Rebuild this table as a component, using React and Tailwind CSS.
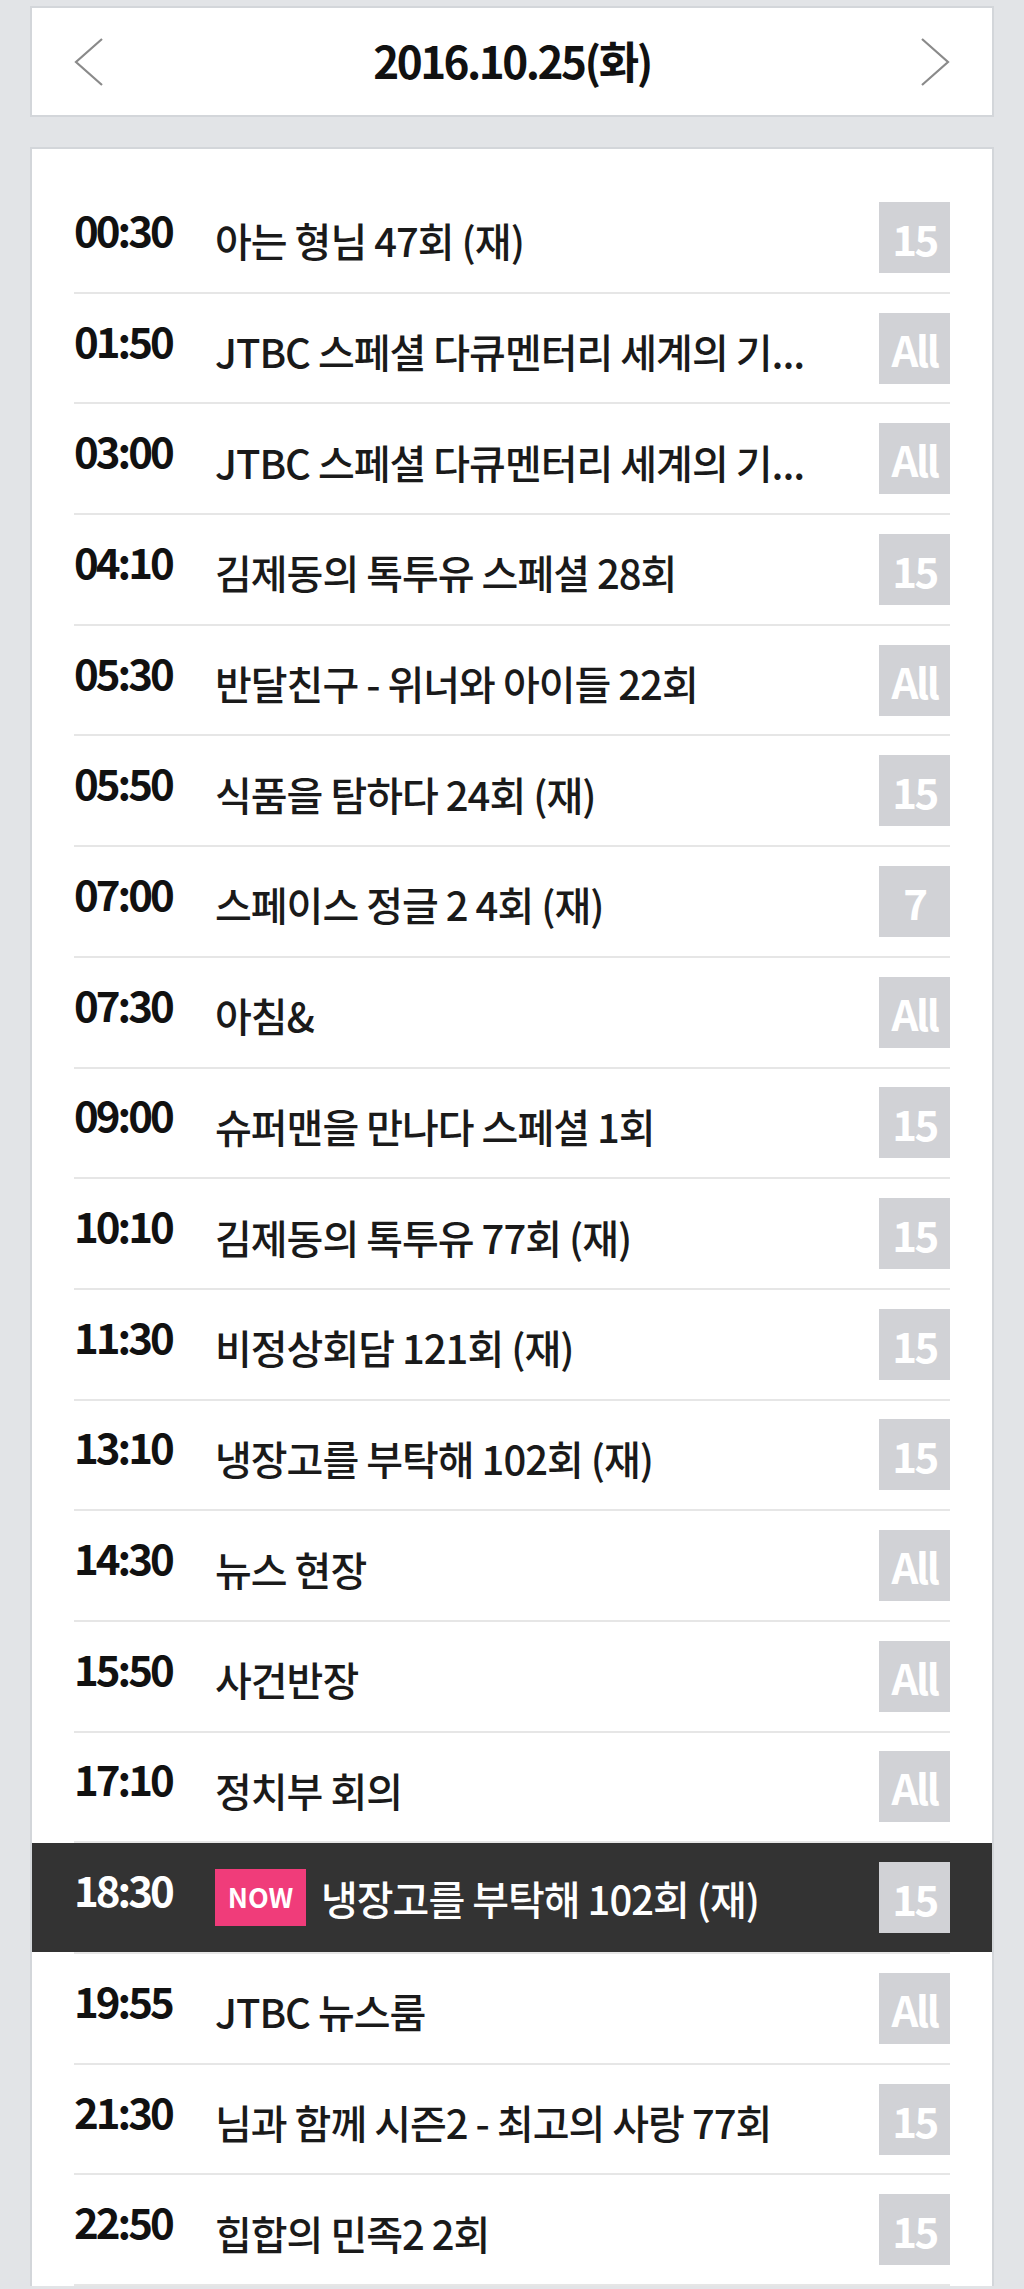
import React from 'react';

const programs = [
  { time: '00:30', title: '아는 형님 47회 (재)', rating: '15' },
  { time: '01:50', title: 'JTBC 스페셜 다큐멘터리 세계의 기...', rating: 'All' },
  { time: '03:00', title: 'JTBC 스페셜 다큐멘터리 세계의 기...', rating: 'All' },
  { time: '04:10', title: '김제동의 톡투유 스페셜 28회', rating: '15' },
  { time: '05:30', title: '반달친구 - 위너와 아이들 22회', rating: 'All' },
  { time: '05:50', title: '식품을 탐하다 24회 (재)', rating: '15' },
  { time: '07:00', title: '스페이스 정글 2 4회 (재)', rating: '7' },
  { time: '07:30', title: '아침&', rating: 'All' },
  { time: '09:00', title: '슈퍼맨을 만나다 스페셜 1회', rating: '15' },
  { time: '10:10', title: '김제동의 톡투유 77회 (재)', rating: '15' },
  { time: '11:30', title: '비정상회담 121회 (재)', rating: '15' },
  { time: '13:10', title: '냉장고를 부탁해 102회 (재)', rating: '15' },
  { time: '14:30', title: '뉴스 현장', rating: 'All' },
  { time: '15:50', title: '사건반장', rating: 'All' },
  { time: '17:10', title: '정치부 회의', rating: 'All' },
  { time: '18:30', title: '냉장고를 부탁해 102회 (재)', rating: '15', now: true },
  { time: '19:55', title: 'JTBC 뉴스룸', rating: 'All' },
  { time: '21:30', title: '님과 함께 시즌2 - 최고의 사랑 77회', rating: '15' },
  { time: '22:50', title: '힙합의 민족2 2회', rating: '15' },
];

const font = { fontFamily: '"Noto Sans CJK KR", "Noto Sans", sans-serif' };

function Chevron({ dir }) {
  const points = dir === 'left' ? '28,1 2,24 28,47' : '2,1 28,24 2,47';
  return (
    <svg width="30" height="48" viewBox="0 0 30 48" fill="none">
      <polyline points={points} stroke="#8a8a8a" strokeWidth="2.2" />
    </svg>
  );
}

function ProgramRow({ item }) {
  return (
    <>
      <div className={item.now ? 'bg-[#333333]' : ''}>
        <div className="mx-[42px] h-[108.7px] flex items-center">
          <div
            className={`w-[141px] shrink-0 mb-[18px] text-[42px] font-bold tracking-[-3px] ${item.now ? 'text-white' : 'text-[#111]'}`}
          >
            {item.time}
          </div>
          <div className="flex-1 flex items-center min-w-0">
            {item.now && (
              <span className="w-[91px] h-[57px] mr-[15px] bg-[#f03c7a] text-white text-[27px] font-bold flex items-center justify-center shrink-0">
                NOW
              </span>
            )}
            <span
              className={`text-[40px] font-medium tracking-[-1px] whitespace-nowrap ${item.now ? 'text-white' : 'text-[#1a1a1a] mt-[6px]'}`}
            >
              {item.title}
            </span>
          </div>
          <div className="w-[71px] h-[71px] bg-[#d1d2d6] text-white text-[42px] font-bold tracking-[-2.5px] flex items-center justify-center shrink-0">
            {item.rating}
          </div>
        </div>
      </div>
      <div className="mx-[42px] h-[2px] bg-[#e6e6e6]" />
    </>
  );
}

export default function App() {
  return (
    <div className="min-h-screen bg-[#e2e4e7] px-[30px] pt-[6px] overflow-hidden" style={font}>
      {/* Date header */}
      <div className="h-[111px] bg-white border-2 border-[#d3d6da] px-[42px] flex items-center justify-between">
        <Chevron dir="left" />
        <h1 className="mb-[4px] text-[44px] font-bold tracking-[-2.5px] text-[#111] leading-none">2016.10.25(화)</h1>
        <Chevron dir="right" />
      </div>

      {/* Schedule */}
      <div className="mt-[30px] bg-white border-x-2 border-t-2 border-[#d3d6da] pt-[34px]">
        {programs.map((item) => (
          <ProgramRow key={item.time} item={item} />
        ))}
      </div>
    </div>
  );
}
